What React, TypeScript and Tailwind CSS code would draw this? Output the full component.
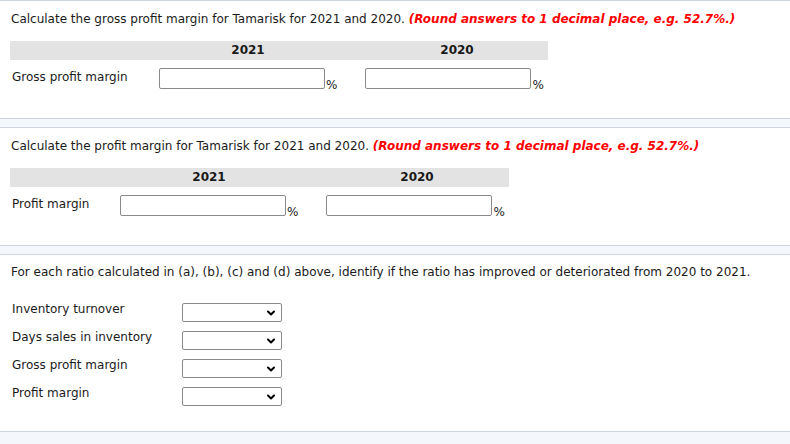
import { ChevronDown } from "lucide-react"

const font = { fontFamily: '"DejaVu Sans", Verdana, sans-serif' }

function Separator() {
  return <div className="h-[10px] bg-[#f4f8fc] border-y border-[#cfd6e0]" />
}

function PctInput() {
  return (
    <div className="flex items-end">
      <div className="w-[166px] h-[21px] border border-[#8a8a8a] rounded-[2px] bg-white" />
      <span className="text-[12px] leading-none ml-px mb-[-2px]">%</span>
    </div>
  )
}

function Select() {
  return (
    <div className="w-[100px] h-[19px] border border-[#8a8a8a] rounded-[2px] bg-white flex items-center justify-end pr-[4px]">
      <ChevronDown className="w-[12px] h-[12px] text-black" strokeWidth={4} />
    </div>
  )
}

function Note() {
  return (
    <span className="text-[#ff0000] font-bold italic">
      (Round answers to 1 decimal place, e.g. 52.7%.)
    </span>
  )
}

export default function App() {
  return (
    <main className="w-[790px] h-[444px] bg-[#f4f8fc] text-[#1a1a1a] text-[12px] overflow-hidden" style={font}>
      <div className="border-t border-[#cfd6e0]" />
      <section className="bg-white h-[117px] px-[10px] pt-[9px]">
        <p className="leading-[18px] pl-px">
          Calculate the gross profit margin for Tamarisk for 2021 and 2020. <Note />
        </p>
        <div className="mt-[13px] w-[538px] h-[19px] bg-[#e3e3e3] flex font-bold leading-[19px]">
          <div className="w-[120px]" />
          <div className="w-[236px] text-center">2021</div>
          <div className="w-[182px] text-center">2020</div>
        </div>
        <div className="flex mt-[8px]">
          <div className="w-[149px] pl-[2px] pt-px leading-[16px]">Gross profit margin</div>
          <PctInput />
          <div className="w-[28px]" />
          <PctInput />
        </div>
      </section>
      <Separator />
      <section className="bg-white h-[117px] px-[10px] pt-[9px]">
        <p className="leading-[18px] pl-px">
          Calculate the profit margin for Tamarisk for 2021 and 2020. <Note />
        </p>
        <div className="mt-[13px] w-[499px] h-[19px] bg-[#e3e3e3] flex font-bold leading-[19px]">
          <div className="w-[83px]" />
          <div className="w-[232px] text-center">2021</div>
          <div className="w-[184px] text-center">2020</div>
        </div>
        <div className="flex mt-[8px]">
          <div className="w-[110px] pl-[2px] pt-px leading-[16px]">Profit margin</div>
          <PctInput />
          <div className="w-[28px]" />
          <PctInput />
        </div>
      </section>
      <Separator />
      <section className="bg-white h-[176px] px-[10px] pt-[8px]">
        <p className="leading-[18px] pl-px">
          For each ratio calculated in (a), (b), (c) and (d) above, identify if the ratio has improved or deteriorated from 2020 to 2021.
        </p>
        <div className="mt-[22px] flex flex-col gap-[9px]">
          {["Inventory turnover", "Days sales in inventory", "Gross profit margin", "Profit margin"].map((l) => (
            <div key={l} className="flex">
              <div className="w-[172px] pl-[2px] leading-[14px] -mt-px">{l}</div>
              <Select />
            </div>
          ))}
        </div>
      </section>
      <div className="border-t border-[#cfd6e0]" />
    </main>
  )
}
